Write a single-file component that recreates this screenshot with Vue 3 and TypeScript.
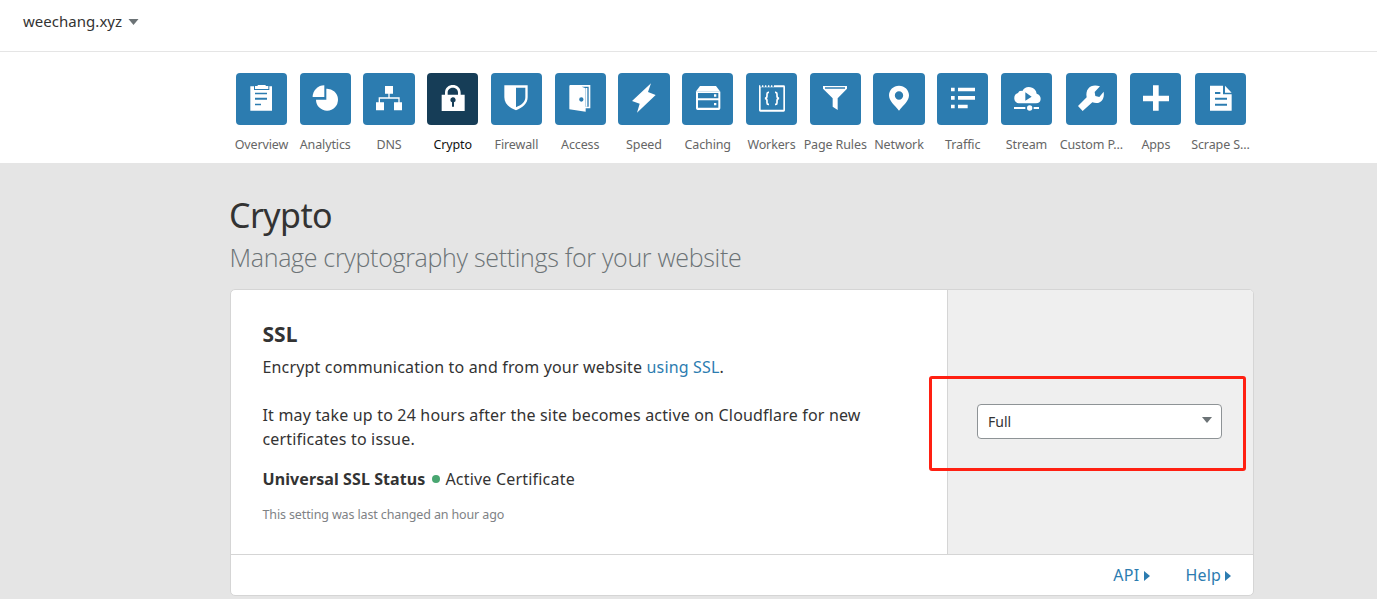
<script setup lang="ts">
interface NavItem {
  label: string
  icon: string
  active?: boolean
}

// Icon markup is drawn on a 153 x 156 grid that covers the whole tile.
const items: NavItem[] = [
  {
    label: 'Overview',
    icon: '<path d="M43 40h11v11h46V40h8v73H43z"/><path d="M57 39h8v-3h24v3h8v9H57z"/><path class="cut" d="M57 59h36v5H57zM57 74h36v6H57zM57 92h18v5H57z"/>',
  },
  {
    label: 'Analytics',
    icon: '<path d="M79 47A33 33 0 1 1 48 80H79z"/><path d="M73 37v35H38A35 35 0 0 1 73 37z"/>',
  },
  {
    label: 'DNS',
    icon: '<path d="M66 39h24v23H80v11h30v15h7v24H93V88h13V77H51v11h12v24H39V88h8V73h29V62H66z"/>',
  },
  {
    label: 'Crypto',
    active: true,
    icon: '<path d="M44 65h10v-6c0-31 47-31 47 0v6h12v49H44zM62 65h31v-6c0-20-31-20-31 0z" fill-rule="evenodd"/><path class="cut" d="M70 81a8 8 0 1 1 11 7v13h-6V88a8 8 0 0 1-5-7z"/>',
  },
  {
    label: 'Firewall',
    icon: '<path fill-rule="evenodd" d="M40 37h70v36c0 20-16 31-35 39C56 104 40 93 40 73zM75 44v59c16-7 28-15 28-30V44z"/>',
  },
  {
    label: 'Access',
    icon: '<path fill-rule="evenodd" d="M45 36h61v70H92v-5h9V41H80l12 5v70l-49-7V38zM79 73a6 6 0 1 0 0 13a6 6 0 1 0 0-13z"/><path d="M93 45h4v56h-4z"/>',
  },
  {
    label: 'Speed',
    icon: '<path d="M99 31L42 84l23 8-8 27 56-53-23-9z"/>',
  },
  {
    label: 'Caching',
    icon: '<path d="M54 39h48l13 17H41z"/><path fill-rule="evenodd" d="M42 56h73v50q0 5-5 5H47q-5 0-5-5zM48 60v16h61V60zM48 82v22h61V82z"/><path d="M96 64h7v7h-7zM96 90h7v7h-7z"/>',
  },
  {
    label: 'Workers',
    icon: '<path fill-rule="evenodd" d="M39 37h4v4h5v-4h4v4h5v-4h4v4h5v-4h4v4h5v-4h4v4h5v-4h29q4 0 4 4v71q0 4-4 4H43q-4 0-4-4zM44 43v67h68V43z"/><path class="line" stroke-width="5" d="M69 58h-2q-4 0-4 5v6q0 6-6 7q6 1 6 7v6q0 5 4 5h2M87 58h2q4 0 4 5v6q0 6 6 7q-6 1-6 7v6q0 5-4 5h-2"/>',
  },
  {
    label: 'Page Rules',
    icon: '<path fill-rule="evenodd" d="M39 39h72v8L83 76v35l-15-10V76L39 47zM45 43v4h60v-4z"/>',
  },
  {
    label: 'Network',
    icon: '<path fill-rule="evenodd" d="M78 38c17 0 30 13 30 29c0 17-16 29-30 46C64 96 48 84 48 67c0-16 13-29 30-29zM78 55a12 12 0 1 0 0 25a12 12 0 1 0 0-25z"/>',
  },
  {
    label: 'Traffic',
    icon: '<path d="M42 44h11v11H42zM63 44h51v11H63zM42 69h11v11H42zM63 69h51v11H63zM42 95h11v11H42zM63 95h29v11H63z"/>',
  },
  {
    label: 'Stream',
    icon: '<path fill-rule="evenodd" d="M53 91A16 16 0 0 1 51 60Q54 52 64 54A23 23 0 0 1 107 62Q119 66 119 78Q118 91 105 91zM73 58v25l19-12z"/><path d="M39 102h34v6H39zM98 102h16v6H98z"/><circle cx="86" cy="105" r="8"/>',
  },
  {
    label: 'Custom P...',
    icon: '<path d="M102 40L86 57l2 12 12 3 13-16c4 25-11 40-34 32L50 114 36 99 62 73C57 45 77 31 102 40z"/>',
  },
  {
    label: 'Apps',
    icon: '<path d="M69 37h17v31h31v17H86v28H69V85H39V68h30z"/>',
  },
  {
    label: 'Scrape S...',
    icon: '<path fill-rule="evenodd" d="M45 38h39v26h26v49H45zM60 57v6h16v-6zM60 74v6h36v-6zM60 92v6h36v-6z"/><path d="M90 38l20 21H90z"/>',
  },
]
</script>

<template>
  <div class="page">
    <header class="topbar">
      <span class="domain">weechang.xyz</span>
      <svg class="caret" viewBox="0 0 10 6"><path d="M0 0h10L5 6z" /></svg>
    </header>
    <nav class="nav">
      <a v-for="item in items" :key="item.label" class="nav-item" :class="{ active: item.active }">
        <span class="tile"><svg class="glyph" viewBox="0 0 153 156" v-html="item.icon" /></span>
        <span class="label">{{ item.label }}</span>
      </a>
    </nav>
    <main class="content">
      <h1>Crypto</h1>
      <p class="subtitle">Manage cryptography settings for your website</p>
      <section class="card">
        <div class="card-main">
          <div class="info">
            <h2>SSL</h2>
            <p class="line1">Encrypt communication to and from your website <a>using SSL</a>.</p>
            <p class="note">It may take up to 24 hours after the site becomes active on Cloudflare for new<br>certificates to issue.</p>
            <div class="status"><b>Universal SSL Status</b><i class="dot"></i><span>Active Certificate</span></div>
            <p class="changed">This setting was last changed an hour ago</p>
          </div>
          <div class="control">
            <div class="select">
              <span>Full</span>
              <svg class="caret" viewBox="0 0 10 6"><path d="M0 0h10L5 6z" /></svg>
            </div>
            <div class="highlight"></div>
          </div>
        </div>
        <footer class="card-foot">
          <a class="api">API<svg viewBox="0 0 6 10"><path d="M0 0l6 5-6 5z" /></svg></a>
          <a class="help">Help<svg viewBox="0 0 6 10"><path d="M0 0l6 5-6 5z" /></svg></a>
        </footer>
      </section>
    </main>
  </div>
</template>

<style>
body {
  margin: 0;
  overflow: hidden;
}
</style>

<style scoped>
.page {
  height: 599px;
  overflow: hidden;
  background: #e5e5e5;
  color: #333;
  font-family: 'Noto Sans', 'Open Sans', sans-serif;
  font-size: 16px;
}
h1, h2, p {
  margin: 0;
  font-weight: 400;
  white-space: nowrap;
}
.topbar {
  box-sizing: border-box;
  height: 52px;
  padding: 9px 0 0 23px;
  display: flex;
  align-items: flex-start;
  background: #fff;
  border-bottom: 1px solid #e5e5e5;
}
.domain {
  font-size: 15px;
  line-height: 24px;
  letter-spacing: 0.03px;
}
.caret {
  width: 10px;
  height: 6px;
  fill: #6c7376;
}
.topbar .caret {
  width: 11px;
  margin: 10px 0 0 6px;
}
.nav {
  box-sizing: border-box;
  height: 111px;
  padding: 21px 0 0 229.6px;
  display: grid;
  grid-template-columns: repeat(13, 63.75px) 66px 63px 66.2px;
  background: #fff;
}
.nav-item {
  display: flex;
  flex-direction: column;
  align-items: center;
  color: #666;
}
.tile {
  width: 51.3px;
  height: 52px;
  border-radius: 4px;
  background: #2c7cb0;
}
.glyph {
  display: block;
  width: 51px;
  height: 52px;
  fill: #fff;
}
.glyph :deep(.cut) {
  fill: #2c7cb0;
}
.glyph :deep(.line) {
  fill: none;
  stroke: #fff;
}
.active .tile {
  background: #163d57;
}
.active .glyph :deep(.cut) {
  fill: #163d57;
}
.active {
  color: #111;
}
.label {
  margin-top: 10px;
  font-size: 12.5px;
  line-height: 20px;
  letter-spacing: -0.12px;
  white-space: nowrap;
}
.content {
  width: 1024px;
  padding-left: 230px;
}
h1 {
  padding-top: 29px;
  font-size: 34px;
  line-height: 46px;
  letter-spacing: -0.6px;
  text-indent: -1px;
}
.subtitle {
  margin-top: 2px;
  color: #6c7376;
  font-family: 'Open Sans', sans-serif;
  font-size: 25px;
  font-weight: 300;
  line-height: 34px;
  letter-spacing: -0.31px;
  text-indent: -0.5px;
}
.card {
  box-sizing: border-box;
  width: 1024px;
  height: 307px;
  margin-top: 15px;
  border: 1px solid #d5d5d5;
  border-radius: 5px;
  background: #fff;
}
.card-main {
  display: flex;
  height: 264px;
  border-bottom: 1px solid #d5d5d5;
}
.info {
  box-sizing: border-box;
  width: 716px;
  padding: 30px 0 0 31.5px;
}
h2 {
  font-size: 21px;
  font-weight: 700;
  line-height: 28px;
}
.line1 {
  margin-top: 7px;
  line-height: 24px;
  letter-spacing: 0.165px;
}
.info a, .card-foot a {
  color: #2c7cb0;
}
.note {
  margin-top: 24px;
  line-height: 24px;
  letter-spacing: 0.18px;
}
.status {
  display: flex;
  align-items: center;
  margin-top: 16px;
  line-height: 24px;
  letter-spacing: 0.2px;
}
.status b {
  letter-spacing: 0.09px;
}
.dot {
  width: 8px;
  height: 8px;
  margin: 0 5px 0 7px;
  border-radius: 50%;
  background: #49a671;
}
.changed {
  margin-top: 14px;
  color: #808285;
  font-size: 12.5px;
  line-height: 20px;
  letter-spacing: -0.13px;
}
.control {
  position: relative;
  flex: 1;
  padding: 114px 31px 0 29px;
  border-left: 1px solid #d5d5d5;
  border-radius: 0 4px 0 0;
  background: #efefef;
}
.select {
  box-sizing: border-box;
  height: 35px;
  display: flex;
  align-items: center;
  justify-content: space-between;
  padding: 0 9px 1px 10px;
  border: 1px solid #8e9396;
  border-radius: 4px;
  background: #fff;
  font-size: 14px;
}
.select .caret {
  margin-bottom: 3px;
}
.highlight {
  position: absolute;
  box-sizing: border-box;
  top: 86px;
  left: -19px;
  width: 317px;
  height: 95px;
  border: 3px solid #ff2012;
  border-radius: 3px;
}
.card-foot {
  display: flex;
  justify-content: flex-end;
  height: 41px;
  padding-right: 22px;
  line-height: 41px;
}
.card-foot svg {
  width: 6px;
  height: 10px;
  margin-left: 4px;
  fill: #2c7cb0;
}
.api {
  letter-spacing: 0.3px;
}
.help {
  margin-left: 36px;
  letter-spacing: 0.15px;
}
</style>
